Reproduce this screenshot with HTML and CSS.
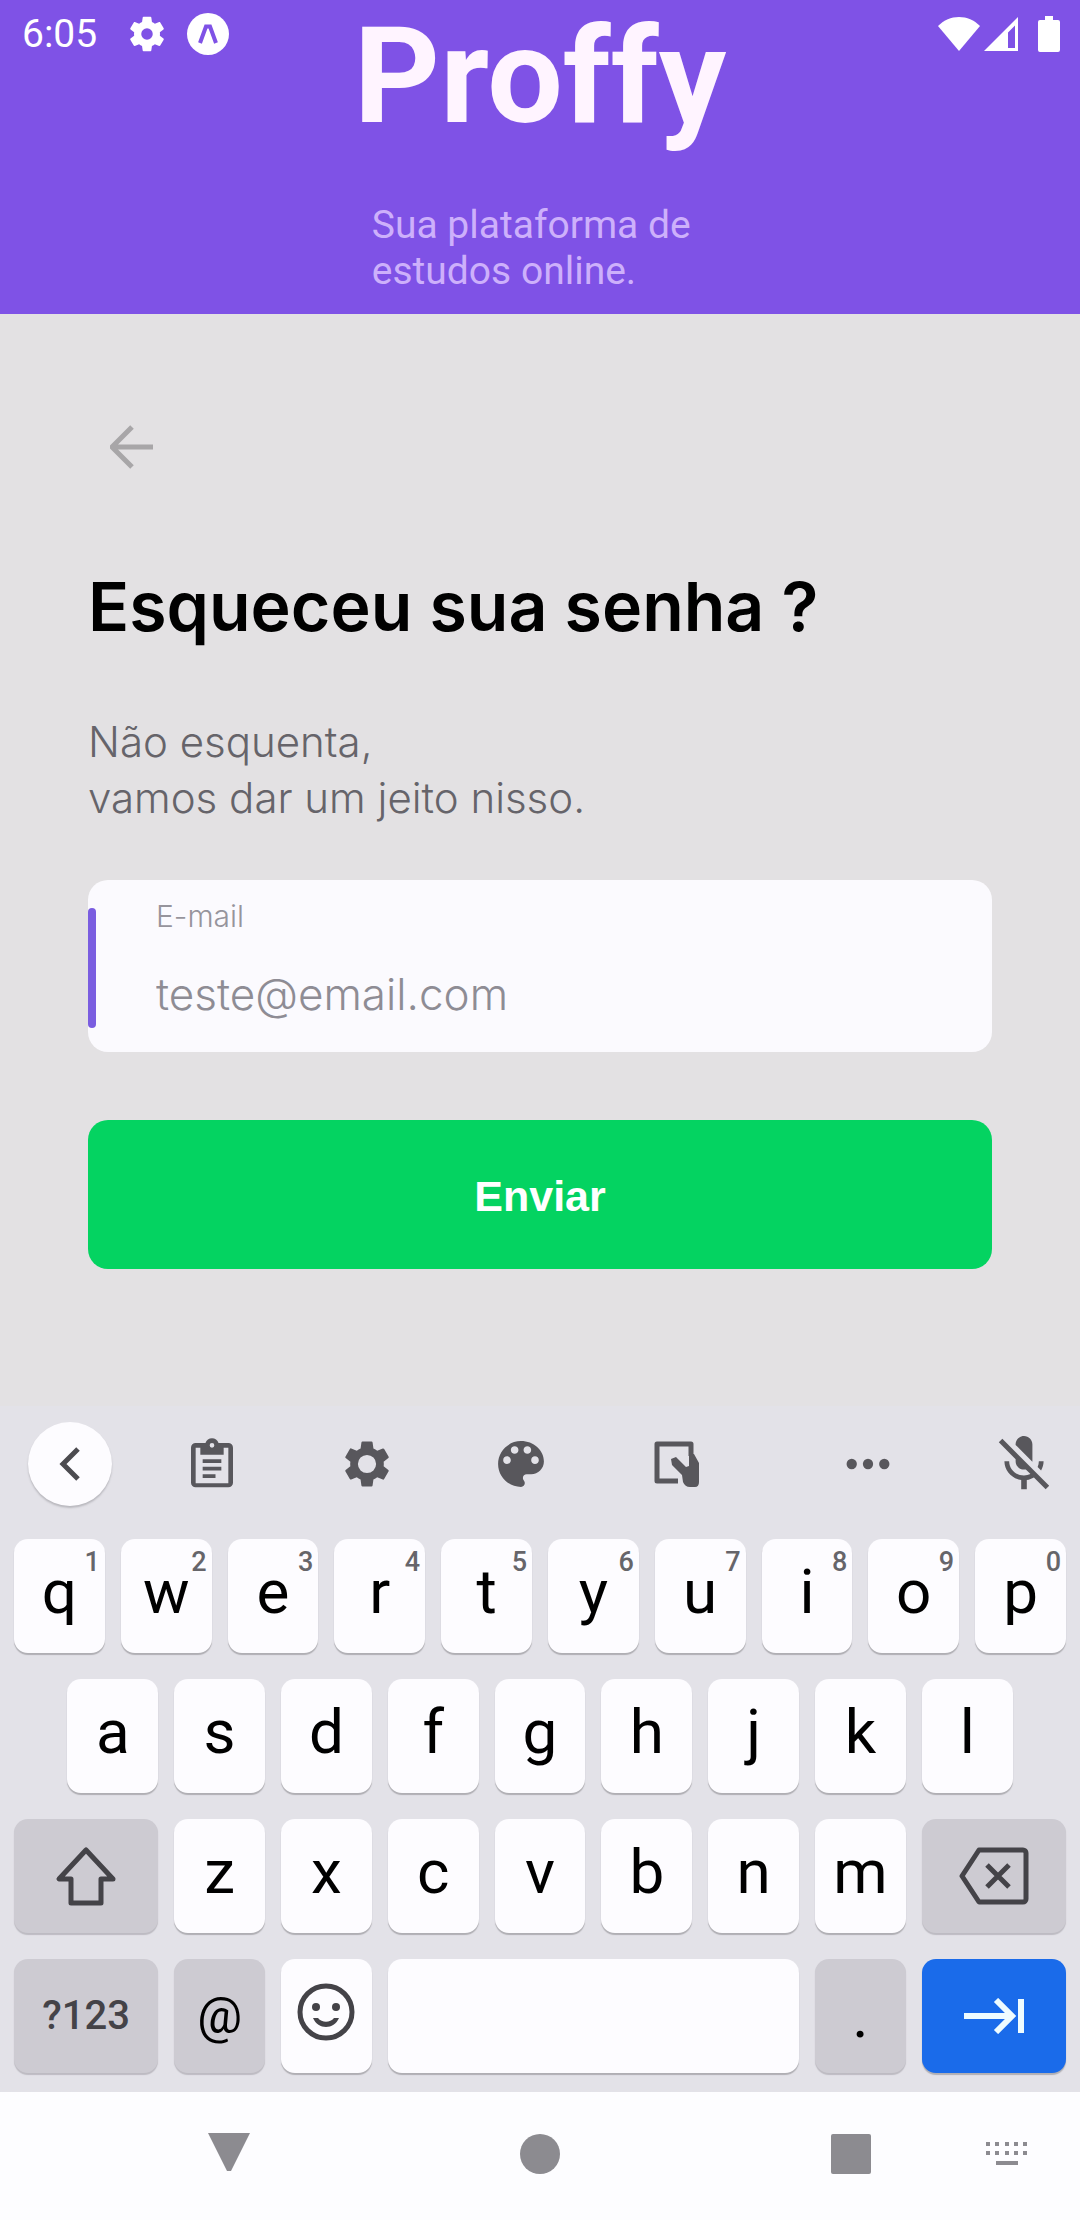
FILE: index.html
```html
<!DOCTYPE html>
<html lang="pt-BR">
<head>
<meta charset="utf-8">
<meta name="viewport" content="width=device-width, initial-scale=1">
<title>Proffy - Esqueceu sua senha</title>
<link rel="stylesheet" href="styles.css">
</head>
<body>
<div class="screen">
  <header class="hero">
    <div class="status">
      <span class="status-time">6:05</span>
      <svg class="status-gear" viewBox="2 2 20 20" aria-hidden="true"><path d="M19.14 12.94c.04-.3.06-.61.06-.94 0-.32-.02-.64-.07-.94l2.03-1.58c.18-.14.23-.41.12-.61l-1.92-3.32c-.12-.22-.37-.29-.59-.22l-2.39.96c-.5-.38-1.03-.7-1.62-.94l-.36-2.54c-.04-.24-.24-.41-.48-.41h-3.84c-.24 0-.43.17-.47.41l-.36 2.54c-.59.24-1.13.57-1.62.94l-2.39-.96c-.22-.08-.47 0-.59.22L2.74 8.87c-.12.21-.08.47.12.61l2.03 1.58c-.05.3-.09.63-.09.94s.02.64.07.94l-2.03 1.58c-.18.14-.23.41-.12.61l1.92 3.32c.12.22.37.29.59.22l2.39-.96c.5.38 1.03.7 1.62.94l.36 2.54c.05.24.24.41.48.41h3.84c.24 0 .44-.17.47-.41l.36-2.54c.59-.24 1.13-.56 1.62-.94l2.39.96c.22.08.47 0 .59-.22l1.92-3.32c.12-.22.07-.47-.12-.61l-2.01-1.58zM12 15.2a3.2 3.2 0 1 1 0-6.4 3.2 3.2 0 0 1 0 6.4z"/></svg>
      <svg class="status-expo" viewBox="0 0 42 42" aria-hidden="true"><circle cx="21" cy="21" r="21"/><path class="cut" d="M13 30L19 13.500h4L29 30" /></svg>
      <span class="status-fill"></span>
      <svg class="status-wifi" viewBox="0 0 42 34" aria-hidden="true"><path d="M0 9C6 3 13 0 21 0s15 3 21 9L21 34z"/></svg>
      <svg class="status-signal" viewBox="0 0 34 34" aria-hidden="true"><path fill-rule="evenodd" d="M34 0v34H0zM31 8.500L24 15.500V31h7z"/></svg>
      <svg class="status-battery" viewBox="0 0 22 36" aria-hidden="true"><path d="M7 0h8v4h5a2 2 0 0 1 2 2v28a2 2 0 0 1-2 2H2a2 2 0 0 1-2-2V6a2 2 0 0 1 2-2h5z"/></svg>
    </div>
    <div class="brand">
      <div class="logo">Proffy</div>
      <p class="tagline">Sua plataforma de<br>estudos online.</p>
    </div>
  </header>

  <main class="content">
    <button class="back" type="button" aria-label="Voltar">
      <svg viewBox="0 0 44 44" aria-hidden="true"><path d="M43 22H3M22 2L2 22l20 20"/></svg>
    </button>
    <h1 class="title">Esqueceu sua senha ?</h1>
    <p class="lead">Não esquenta,<br>vamos dar um jeito nisso.</p>
    <form class="form">
      <div class="field">
        <label class="field-label" for="email">E-mail</label>
        <input class="field-input" id="email" type="email" placeholder="teste@email.com">
      </div>
      <button class="submit" type="button">Enviar</button>
    </form>
  </main>

  <section class="keyboard" aria-label="Teclado">
    <div class="tools">
      <button class="tool-back" type="button" aria-label="Fechar ferramentas"><svg viewBox="0 0 24 34" aria-hidden="true"><path d="M20 2L5 17l15 15"/></svg></button>
      <div class="tool-group">
        <button class="tool" type="button" aria-label="Área de transferência"><svg viewBox="0 0 24 24" aria-hidden="true"><path fill-rule="evenodd" d="M19 3h-4.200C14.400 1.800 13.300 1 12 1s-2.400.8-2.800 2H5a2 2 0 0 0-2 2v15a2 2 0 0 0 2 2h14a2 2 0 0 0 2-2V5a2 2 0 0 0-2-2zm-7 0a1 1 0 1 1 0 2 1 1 0 0 1 0-2zm7 17.200H5V5h2v3h10V5h2zM8 10h8v1.600H8zM8 13.200h8v1.600H8zM8 16.400h5.500V18H8z"/></svg></button>
        <button class="tool" type="button" aria-label="Configurações"><svg viewBox="0 0 24 24" aria-hidden="true"><path d="M19.14 12.94c.04-.3.06-.61.06-.94 0-.32-.02-.64-.07-.94l2.03-1.58c.18-.14.23-.41.12-.61l-1.92-3.32c-.12-.22-.37-.29-.59-.22l-2.39.96c-.5-.38-1.03-.7-1.62-.94l-.36-2.54c-.04-.24-.24-.41-.48-.41h-3.840c-.24 0-.43.17-.47.41l-.36 2.54c-.59.24-1.13.57-1.62.94l-2.39-.96c-.22-.08-.47 0-.59.22L2.74 8.87c-.12.21-.08.47.12.61l2.03 1.58c-.05.3-.09.63-.09.94s.02.64.07.94l-2.03 1.58c-.18.14-.23.41-.12.61l1.92 3.32c.12.22.37.29.59.22l2.39-.96c.5.38 1.03.7 1.62.94l.36 2.54c.05.24.24.41.48.41h3.84c.24 0 .44-.17.47-.41l.36-2.54c.59-.24 1.13-.56 1.62-.94l2.39.96c.22.08.47 0 .59-.22l1.92-3.32c.12-.22.07-.47-.12-.61l-2.01-1.58zM12 15.900a3.900 3.900 0 1 1 0-7.800 3.900 3.900 0 0 1 0 7.800z"/></svg></button>
        <button class="tool" type="button" aria-label="Temas"><svg viewBox="1 1 22 22" aria-hidden="true"><path d="M12 3c-4.970 0-9 4.030-9 9s4.030 9 9 9c.83 0 1.500-.67 1.500-1.500 0-.39-.15-.74-.39-1.010-.23-.26-.38-.61-.38-.99 0-.83.67-1.500 1.500-1.500H16c2.760 0 5-2.240 5-5 0-4.420-4.030-8-9-8zm-5.500 9c-.83 0-1.500-.67-1.500-1.500S5.670 9 6.500 9 8 9.670 8 10.500 7.330 12 6.500 12zm3-4C8.670 8 8 7.330 8 6.500S8.670 5 9.500 5s1.500.67 1.500 1.500S10.330 8 9.500 8zm5 0c-.83 0-1.500-.67-1.500-1.500S13.670 5 14.500 5s1.500.67 1.500 1.500S15.330 8 14.500 8zm3 4c-.83 0-1.500-.67-1.500-1.500S16.670 9 17.500 9s1.500.67 1.500 1.500-.67 1.500-1.500 1.500z"/></svg></button>
        <button class="tool" type="button" aria-label="Uma mão"><svg viewBox="0 0 56 56" aria-hidden="true"><path class="frame" d="M30 45H9V8H43V20"/><path d="M28 21L23 23L24 29L34 39L35 46Q37 51 42 51H47Q51 51 51 46V27L46 18H41L41 30L38 31Z"/></svg></button>
      </div>
      <button class="tool tool-more" type="button" aria-label="Mais"><svg viewBox="0 0 56 56" aria-hidden="true"><circle cx="9" cy="28" r="6"/><circle cx="28" cy="28" r="6"/><circle cx="47" cy="28" r="6"/></svg></button>
      <button class="tool" type="button" aria-label="Microfone desligado"><svg viewBox="2 2 20 20" aria-hidden="true"><path d="M19 11h-1.700c0 .74-.16 1.430-.43 2.050l1.230 1.230c.56-.98.9-2.090.9-3.280zm-4.020.17c0-.06.02-.11.02-.17V5c0-1.660-1.340-3-3-3S9 3.340 9 5v.18l5.980 5.990zM4.270 3L3 4.270l6.010 6.010V11c0 1.660 1.330 3 2.990 3 .22 0 .44-.03.65-.08l1.660 1.660c-.71.33-1.500.52-2.310.52-2.760 0-5.300-2.100-5.300-5.100H5c0 3.410 2.720 6.230 6 6.720V21h2v-3.280c.91-.13 1.770-.45 2.540-.9L19.730 21 21 19.730 4.270 3z"/></svg></button>
    </div>

    <div class="keys">
      <button class="key" type="button">q<span class="hint">1</span></button>
      <button class="key" type="button">w<span class="hint">2</span></button>
      <button class="key" type="button">e<span class="hint">3</span></button>
      <button class="key" type="button">r<span class="hint">4</span></button>
      <button class="key" type="button">t<span class="hint">5</span></button>
      <button class="key" type="button">y<span class="hint">6</span></button>
      <button class="key" type="button">u<span class="hint">7</span></button>
      <button class="key" type="button">i<span class="hint">8</span></button>
      <button class="key" type="button">o<span class="hint">9</span></button>
      <button class="key" type="button">p<span class="hint">0</span></button>

      <button class="key key-indent" type="button">a</button>
      <button class="key" type="button">s</button>
      <button class="key" type="button">d</button>
      <button class="key" type="button">f</button>
      <button class="key" type="button">g</button>
      <button class="key" type="button">h</button>
      <button class="key" type="button">j</button>
      <button class="key" type="button">k</button>
      <button class="key" type="button">l</button>

      <button class="key key-wide key-mod" type="button" aria-label="Shift"><svg class="icon-shift" viewBox="0 0 64 60" aria-hidden="true"><path d="M32 4L5 33h12v24h30V33h12z"/></svg></button>
      <button class="key" type="button">z</button>
      <button class="key" type="button">x</button>
      <button class="key" type="button">c</button>
      <button class="key" type="button">v</button>
      <button class="key" type="button">b</button>
      <button class="key" type="button">n</button>
      <button class="key" type="button">m</button>
      <button class="key key-wide key-mod" type="button" aria-label="Apagar"><svg class="icon-erase" viewBox="0 0 70 58" aria-hidden="true"><path d="M20 3h44a3 3 0 0 1 3 3v46a3 3 0 0 1-3 3H20L3 29zM28 18l22 22M50 18L28 40"/></svg></button>

      <button class="key key-wide key-mod key-symbols" type="button">?123</button>
      <button class="key key-mod key-at" type="button">@</button>
      <button class="key" type="button" aria-label="Emoji"><svg class="icon-emoji" viewBox="0 0 58 58" aria-hidden="true"><circle class="ring" cx="29" cy="29" r="26"/><circle cx="19" cy="24" r="4"/><circle cx="39" cy="24" r="4"/><path d="M16 35h5c4 5 12 5 16 0h5c-5 12-21 12-26 0z"/></svg></button>
      <button class="key key-space" type="button" aria-label="Espaço"></button>
      <button class="key key-mod" type="button">.</button>
      <button class="key key-wide key-next" type="button" aria-label="Avançar"><svg class="icon-next" viewBox="0 0 60 36" aria-hidden="true"><path d="M0 18h46M32 2l16 16-16 16M57 1v34"/></svg></button>
    </div>
  </section>

  <nav class="navbar" aria-label="Navegação do sistema">
    <div class="nav-main">
      <button class="nav-button" type="button" aria-label="Voltar"><svg viewBox="0 0 42 42" aria-hidden="true"><path d="M0 0h42L23 38h-4z"/></svg></button>
      <button class="nav-button" type="button" aria-label="Início"><svg viewBox="0 0 42 42" aria-hidden="true"><circle cx="21" cy="21" r="20"/></svg></button>
      <button class="nav-button" type="button" aria-label="Recentes"><svg viewBox="0 0 42 42" aria-hidden="true"><rect x="1" y="1" width="40" height="40" rx="2"/></svg></button>
    </div>
    <button class="nav-button" type="button" aria-label="Trocar teclado"><svg viewBox="0 0 42 42" aria-hidden="true"><path d="M0 9h4v4H0zM9 9h4v4H9zM19 9h4v4h-4zM28 9h4v4h-4zM37 9h4v4h-4zM0 18h4v4H0zM9 18h4v4H9zM19 18h4v4h-4zM28 18h4v4h-4zM37 18h4v4h-4zM10 28h22v4H10z"/></svg></button>
  </nav>
</div>
</body>
</html>
```
FILE: styles.css
```css
* {
  box-sizing: border-box;
}

body {
  margin: 0;
  background: #e3e1e3;
  font-family: Roboto, "Liberation Sans", sans-serif;
}

button {
  margin: 0;
  padding: 0;
  border: 0;
  background: none;
  font-family: inherit;
  color: inherit;
}

svg {
  display: block;
}

h1,
p {
  margin: 0;
}

.screen {
  display: flex;
  flex-direction: column;
  min-height: 100vh;
}

/* Header */

.hero {
  position: relative;
  display: flex;
  justify-content: center;
  padding: 0 24px 20px;
  background: #7f52e6;
}

.status {
  position: absolute;
  top: 0;
  left: 0;
  right: 0;
  display: flex;
  align-items: center;
  height: 68px;
  padding: 0 20px 0 22px;
  color: #fff;
  fill: #fff;
}

.status-time {
  font-size: 39px;
  line-height: 68px;
}

.status-gear {
  width: 36px;
  height: 36px;
  margin-left: 32px;
}

.status-expo {
  width: 42px;
  height: 42px;
  margin-left: 22px;
}

.status-expo .cut {
  fill: none;
  stroke: #7f52e6;
  stroke-width: 4;
}

.status-fill {
  flex: 1;
}

.status-wifi {
  width: 42px;
  height: 34px;
}

.status-signal {
  width: 34px;
  height: 34px;
  margin-left: 4px;
}

.status-battery {
  width: 22px;
  height: 36px;
  margin-left: 20px;
}

.logo {
  color: #fff4ff;
  font-size: 134px;
  font-weight: 700;
  line-height: 154px;
}

.tagline {
  margin-top: 48px;
  padding-left: 18px;
  color: #cdb0fb;
  font-size: 39px;
  line-height: 46px;
}

/* Form */

.content {
  flex: 1;
  padding: 105px 88px 128px;
  font-family: Inter, "Liberation Sans", sans-serif;
}

.back {
  display: block;
  padding: 6px 22px;
}

.back svg {
  width: 44px;
  height: 44px;
  fill: none;
  stroke: #a8a6a8;
  stroke-width: 5;
}

.title {
  margin-top: 87px;
  color: #000;
  font-size: 68px;
  font-weight: 600;
  line-height: 88px;
}

.lead {
  margin-top: 64px;
  color: #66646a;
  font-size: 42px;
  font-weight: 300;
  line-height: 56px;
}

.form {
  margin-top: 54px;
}

.field {
  position: relative;
  display: flex;
  flex-direction: column;
  padding: 20px 68px 26px;
  border-radius: 20px;
  background: #fbfafe;
}

.field::before {
  content: "";
  position: absolute;
  top: 28px;
  bottom: 24px;
  left: 0;
  width: 8px;
  border-radius: 4px;
  background: #7a5de0;
}

.field-label {
  color: #96949c;
  font-size: 30px;
  font-weight: 300;
  line-height: 32px;
}

.field-input {
  width: 100%;
  height: 64px;
  margin-top: 30px;
  padding: 0;
  border: 0;
  outline: 0;
  background: none;
  color: #333;
  font-family: inherit;
  font-size: 44px;
  font-weight: 300;
}

.field-input::placeholder {
  color: #8e8c94;
  opacity: 1;
}

.submit {
  display: block;
  width: 100%;
  height: 149px;
  margin-top: 68px;
  padding-top: 4px;
  border-radius: 20px;
  background: #04d361;
  color: #fff;
  font-family: "Liberation Sans", sans-serif;
  font-size: 43px;
  font-weight: 700;
}

/* Keyboard */

.keyboard {
  background: #e3e2e8;
}

.tools {
  display: flex;
  align-items: center;
  height: 116px;
  padding: 0 28px;
  fill: #58575c;
}

.tool-back {
  display: grid;
  place-items: center;
  width: 84px;
  height: 84px;
  margin-right: 72px;
  border-radius: 50%;
  background: #fdfcff;
  box-shadow: 0 2px 2px #b9b8be;
}

.tool-back svg {
  width: 24px;
  height: 34px;
  fill: none;
  stroke: #4c4b50;
  stroke-width: 5;
}

.tool-group {
  flex: 1;
  display: flex;
  justify-content: space-between;
}

.tool,
.tool svg {
  width: 56px;
  height: 56px;
}

.tool .frame {
  fill: none;
  stroke: #58575c;
  stroke-width: 5;
  stroke-linejoin: round;
}

.tool-more {
  margin: 0 100px 0 136px;
}

.tool-more svg {
  width: 48px;
  height: 48px;
  margin: 4px;
}

.keys {
  display: grid;
  grid-template-columns: repeat(20, 1fr);
  grid-auto-rows: 114px;
  gap: 26px 16px;
  padding: 17px 14px 19px;
}

.key {
  position: relative;
  grid-column: span 2;
  display: flex;
  justify-content: center;
  align-items: center;
  padding-bottom: 8px;
  border-radius: 14px;
  background: #fdfcff;
  box-shadow: 0 2px 1px #b0afb4;
  color: #000;
  font-size: 62px;
  line-height: 72px;
}

.key-indent {
  grid-column: 2 / span 2;
}

.key-wide {
  grid-column: span 3;
}

.key-space {
  grid-column: span 8;
}

.key-mod {
  padding-bottom: 0;
  background: #cdcbd2;
  box-shadow: 0 2px 1px #bdbbc2;
}

.key-symbols {
  color: #444348;
  font-size: 40px;
  font-weight: 500;
}

.key-at {
  font-size: 50px;
}

.key-next {
  padding-bottom: 0;
  background: #1a6bea;
}

.hint {
  position: absolute;
  top: 9px;
  right: 5px;
  color: #66656a;
  font-size: 27px;
  font-weight: 500;
  line-height: 28px;
}

.icon-shift,
.icon-erase,
.icon-next {
  fill: none;
  stroke: #444348;
  stroke-width: 5;
  stroke-linejoin: round;
}

.icon-shift {
  width: 64px;
  height: 60px;
}

.icon-erase {
  width: 70px;
  height: 58px;
}

.icon-next {
  width: 60px;
  height: 36px;
  stroke: #eefcff;
  stroke-width: 6;
  stroke-linejoin: miter;
}

.icon-emoji {
  width: 58px;
  height: 58px;
  fill: #444348;
}

.icon-emoji .ring {
  fill: none;
  stroke: #444348;
  stroke-width: 5;
}

/* System navigation */

.navbar {
  display: flex;
  align-items: center;
  gap: 114px;
  height: 128px;
  padding: 0 52px 4px 208px;
  background: #fdfdff;
  fill: #8c8b90;
}

.nav-main {
  flex: 1;
  display: flex;
  justify-content: space-between;
}

.nav-button,
.nav-button svg {
  width: 42px;
  height: 42px;
}
```
